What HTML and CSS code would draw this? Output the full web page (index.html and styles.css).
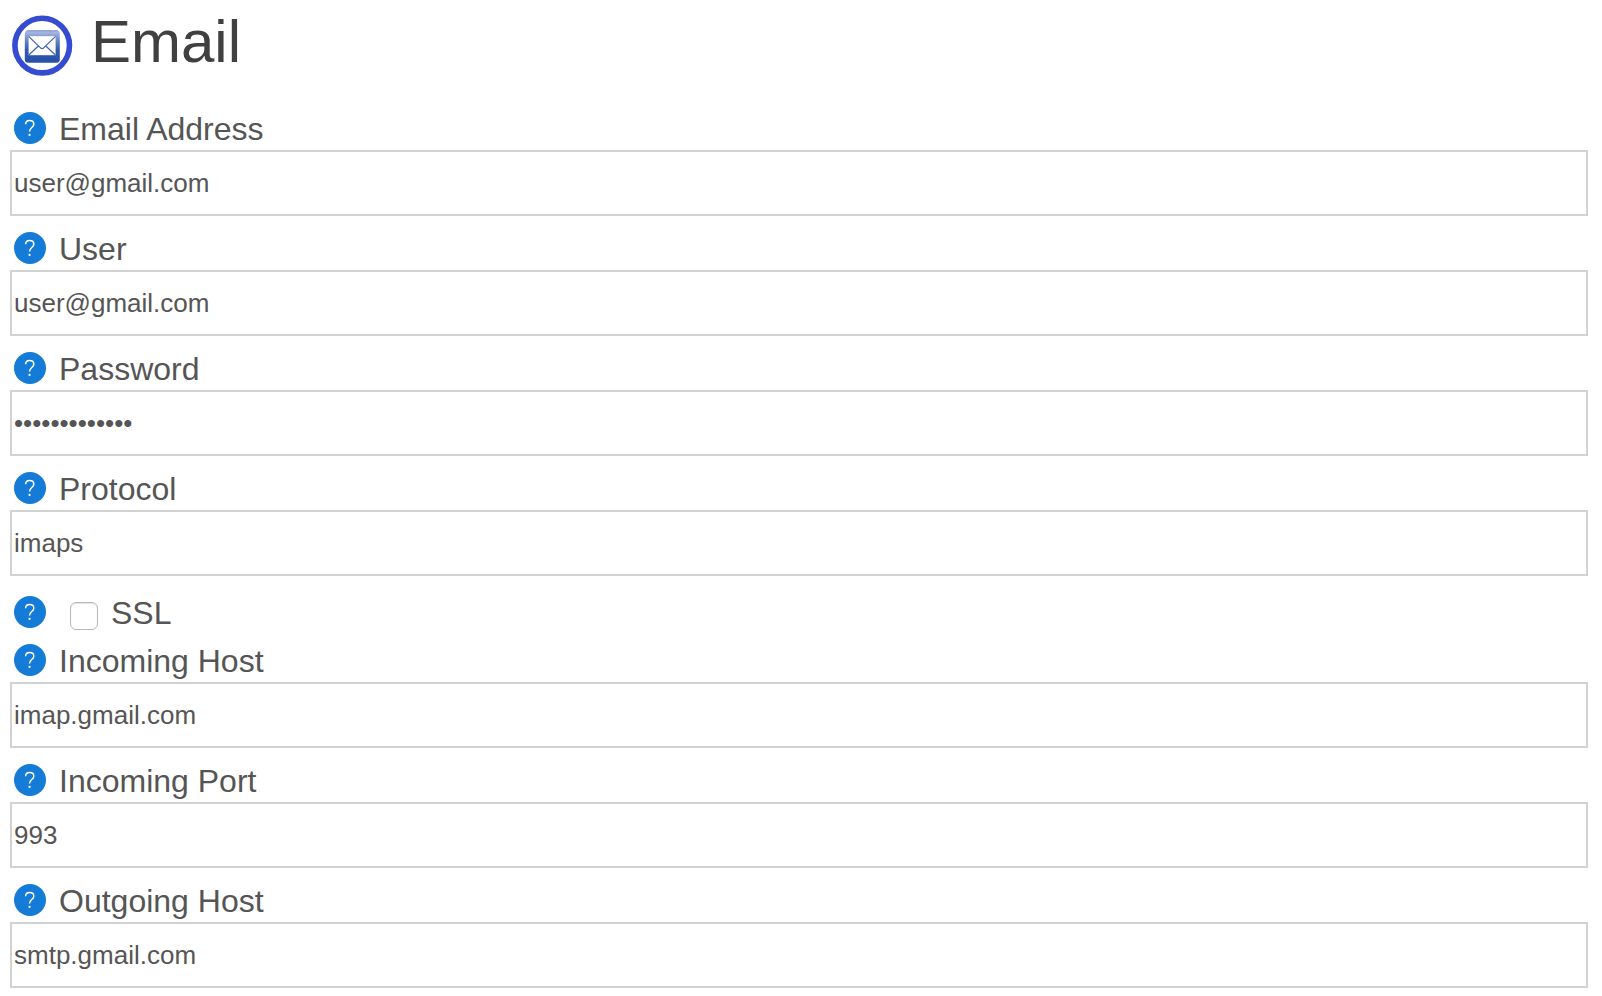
FILE: index.html
```
<!DOCTYPE html>
<html lang="en">
<head>
<meta charset="utf-8">
<title>Email</title>
<link rel="stylesheet" href="styles.css">
</head>
<body>
<svg class="sprite" aria-hidden="true">
  <symbol id="help" viewBox="0 0 32 32">
    <circle cx="16" cy="16" r="16" fill="#147bd7"/>
    <path d="M11.6 12.2C11.7 9.8 13.3 8.6 15.6 8.6C18 8.6 19.8 10 19.8 12.2C19.8 15.6 15.5 15.5 15.5 19.6" fill="none" stroke="#fff" stroke-width="1.5"/>
    <rect x="14.6" y="21.8" width="1.9" height="2.1" fill="#fff"/>
  </symbol>
</svg>
<form class="page">
  <header class="header">
    <svg class="logo" viewBox="0 0 61 61" aria-hidden="true">
      <defs>
        <linearGradient id="tile" x1="0" y1="0" x2="0" y2="1">
          <stop offset="0" stop-color="#6f83c6"/>
          <stop offset="0.05" stop-color="#a9b8e2"/>
          <stop offset="0.3" stop-color="#6d88ca"/>
          <stop offset="0.6" stop-color="#3459ae"/>
          <stop offset="1" stop-color="#2450a8"/>
        </linearGradient>
      </defs>
      <circle cx="30.2" cy="30.6" r="27.3" fill="#fff" stroke="#354bd0" stroke-width="5.6"/>
      <rect x="12.8" y="15.3" width="35" height="32.4" rx="3.5" fill="url(#tile)"/>
      <rect x="16.6" y="21.2" width="27" height="19" fill="#fff"/>
      <path d="M16.6 21.4L28.3 32.6Q30.1 34.6 31.9 32.6L43.6 21.4M16.8 40L26.4 31M43.4 40L33.8 31" fill="none" stroke="#4668b4" stroke-width="1.3"/>
    </svg>
    <h1 class="title">Email</h1>
  </header>

  <div class="field">
    <div class="caption"><button class="help" type="button" aria-label="Help: Email Address"><svg><use href="#help"/></svg></button><label for="address">Email Address</label></div>
    <input class="entry" id="address" type="text" value="user@gmail.com">
  </div>
  <div class="field">
    <div class="caption"><button class="help" type="button" aria-label="Help: User"><svg><use href="#help"/></svg></button><label for="user">User</label></div>
    <input class="entry" id="user" type="text" value="user@gmail.com">
  </div>
  <div class="field">
    <div class="caption"><button class="help" type="button" aria-label="Help: Password"><svg><use href="#help"/></svg></button><label for="password">Password</label></div>
    <input class="entry" id="password" type="password" value="abcdefghijklm">
  </div>
  <div class="field">
    <div class="caption"><button class="help" type="button" aria-label="Help: Protocol"><svg><use href="#help"/></svg></button><label for="protocol">Protocol</label></div>
    <input class="entry" id="protocol" type="text" value="imaps">
  </div>
  <div class="caption caption-check"><button class="help" type="button" aria-label="Help: SSL"><svg><use href="#help"/></svg></button><input class="check" id="ssl" type="checkbox"><label for="ssl">SSL</label></div>
  <div class="field">
    <div class="caption"><button class="help" type="button" aria-label="Help: Incoming Host"><svg><use href="#help"/></svg></button><label for="in-host">Incoming Host</label></div>
    <input class="entry" id="in-host" type="text" value="imap.gmail.com">
  </div>
  <div class="field">
    <div class="caption"><button class="help" type="button" aria-label="Help: Incoming Port"><svg><use href="#help"/></svg></button><label for="in-port">Incoming Port</label></div>
    <input class="entry" id="in-port" type="text" value="993">
  </div>
  <div class="field">
    <div class="caption"><button class="help" type="button" aria-label="Help: Outgoing Host"><svg><use href="#help"/></svg></button><label for="out-host">Outgoing Host</label></div>
    <input class="entry" id="out-host" type="text" value="smtp.gmail.com">
  </div>
</form>
</body>
</html>
```
FILE: styles.css
```
* {
  box-sizing: border-box;
}

body {
  margin: 0;
  background: #fff;
  color: #555;
  font-family: "Liberation Sans", Arial, sans-serif;
  font-size: 32px;
}

.sprite {
  display: none;
}

.page {
  padding: 8px 14px 2px 10px;
}

.header {
  display: flex;
  align-items: flex-start;
  gap: 18px;
  padding: 0 0 26px 2px;
}

.logo {
  width: 61px;
  height: 61px;
  margin-top: 7px;
}

.title {
  margin: 0;
  color: #404040;
  font-size: 60px;
  font-weight: 400;
  line-height: 68px;
}

.field {
  margin-bottom: 6px;
}

.caption {
  display: flex;
  align-items: center;
  gap: 13px;
  padding: 8px 4px 4px;
  line-height: 36px;
}

.caption label {
  padding-top: 2px;
  line-height: 34px;
}

.caption-check {
  padding-top: 12px;
}

.help {
  width: 32px;
  height: 32px;
  padding: 0;
  border: 0;
  border-radius: 50%;
  background: none;
  cursor: pointer;
}

.help svg {
  display: block;
  width: 32px;
  height: 32px;
}

.check {
  appearance: none;
  width: 28px;
  height: 28px;
  margin: 8px 0 0 11px;
  border: 1px solid #b8b8b8;
  border-radius: 6px;
  background: #fff;
  box-shadow: inset 0 1px 1px #e4e4e4;
}

.check:checked {
  background: #147bd7;
}

.entry {
  display: block;
  width: 100%;
  height: 66px;
  padding: 0 2px;
  border: 2px solid #d2d2d2;
  border-radius: 0;
  background: #fff;
  color: #555;
  font: 26px "Liberation Sans", Arial, sans-serif;
}
```
